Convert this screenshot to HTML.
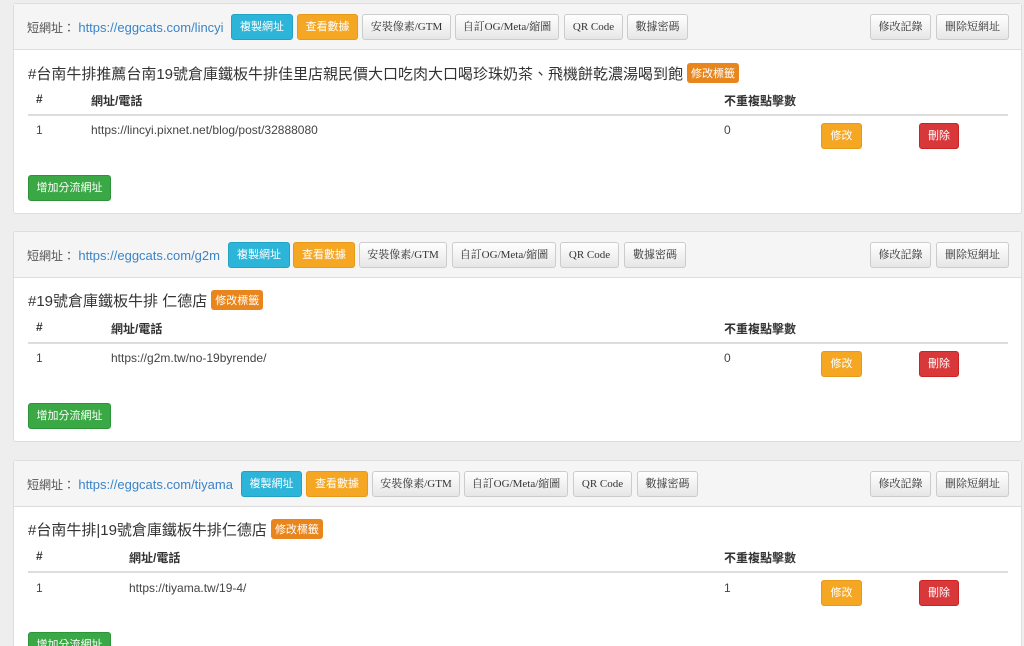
<!DOCTYPE html>
<html><head><meta charset="utf-8"><style>
*{box-sizing:border-box;margin:0;padding:0}
html,body{width:1024px;height:646px;overflow:hidden}
body{background:#eeeeee;font-family:"Liberation Sans","Noto Sans CJK TC",sans-serif;font-size:12px;color:#333;position:relative}
.p{position:absolute;left:13px;width:1009px;height:211px;background:#fff;border:1px solid #ddd;border-radius:3px}
.h{position:absolute;left:0;top:0;right:0;height:46px;background:#f5f5f5;border-bottom:1px solid #ddd}
.a{position:absolute;height:26px;line-height:24px;text-align:center;border-radius:3px;font-size:11px;border:1px solid #ccc;background:linear-gradient(#fff,#e6e6e6);color:#333;font-family:"Liberation Serif","Noto Serif CJK SC",serif}
.info{background:#2cb5d9;border-color:#22a3c5;color:#fff;font-family:"Liberation Sans","Noto Sans CJK TC",sans-serif}
.warn{background:#f5a623;border-color:#e59a1a;color:#fff;font-family:"Liberation Sans","Noto Sans CJK TC",sans-serif}
.dang{background:#d9383a;border-color:#c22;color:#fff;font-family:"Liberation Sans","Noto Sans CJK TC",sans-serif}
.succ{background:#3aa845;border-color:#2e9439;color:#fff;font-family:"Liberation Sans","Noto Sans CJK TC",sans-serif}
.lab{position:absolute;top:15px;left:13px;font-size:12px;color:#555}
.lab span{color:#3a84c9;font-size:13px}
.t{position:absolute;left:14px;font-size:15px;color:#333}
.tag{display:inline-block;background:#e8851c;color:#fff;font-size:11px;padding:2px 4px;border-radius:3px;vertical-align:2px;margin-left:4px}
.th{position:absolute;font-weight:bold;font-size:12px}
.ln{position:absolute;left:14px;width:980px;height:2px;background:#ddd}
.td{position:absolute;font-size:12px;color:#444}
</style></head><body>

<div class="p" style="top:3px">
<div class="h">
<div class="lab">短網址： <span>https://eggcats.com/lincyi</span></div>
<div class="a info" style="left:217px;top:10px;width:62px">複製網址</div>
<div class="a warn" style="left:283px;top:10px;width:61px">查看數據</div>
<div class="a" style="left:348px;top:10px;width:89px">安裝像素/GTM</div>
<div class="a" style="left:441px;top:10px;width:104px">自訂OG/Meta/縮圖</div>
<div class="a" style="left:550px;top:10px;width:59px">QR Code</div>
<div class="a" style="left:613px;top:10px;width:61px">數據密碼</div>
<div class="a" style="left:856px;top:10px;width:61px">修改記錄</div>
<div class="a" style="left:922px;top:10px;width:73px">刪除短網址</div>
</div>
<div class="t" style="top:59px">#台南牛排推薦台南19號倉庫鐵板牛排佳里店親民價大口吃肉大口喝珍珠奶茶、飛機餅乾濃湯喝到飽<span class="tag">修改標籤</span></div>
<div class="th" style="left:22px;top:88px">#</div>
<div class="th" style="left:77px;top:88px">網址/電話</div>
<div class="th" style="left:710px;top:88px">不重複點擊數</div>
<div class="ln" style="top:110px"></div>
<div class="td" style="left:22px;top:119px">1</div>
<div class="td" style="left:77px;top:119px">https://lincyi.pixnet.net/blog/post/32888080</div>
<div class="td" style="left:710px;top:119px">0</div>
<div class="a warn" style="left:807px;top:119px;width:41px">修改</div>
<div class="a dang" style="left:905px;top:119px;width:40px">刪除</div>
<div class="a succ" style="left:14px;top:171px;width:83px">增加分流網址</div>
</div>

<div class="p" style="top:231px">
<div class="h">
<div class="lab">短網址： <span>https://eggcats.com/g2m</span></div>
<div class="a info" style="left:214px;top:10px;width:62px">複製網址</div>
<div class="a warn" style="left:279px;top:10px;width:62px">查看數據</div>
<div class="a" style="left:345px;top:10px;width:88px">安裝像素/GTM</div>
<div class="a" style="left:438px;top:10px;width:104px">自訂OG/Meta/縮圖</div>
<div class="a" style="left:546px;top:10px;width:59px">QR Code</div>
<div class="a" style="left:610px;top:10px;width:62px">數據密碼</div>
<div class="a" style="left:856px;top:10px;width:61px">修改記錄</div>
<div class="a" style="left:922px;top:10px;width:73px">刪除短網址</div>
</div>
<div class="t" style="top:58px">#19號倉庫鐵板牛排 仁德店<span class="tag">修改標籤</span></div>
<div class="th" style="left:22px;top:88px">#</div>
<div class="th" style="left:97px;top:88px">網址/電話</div>
<div class="th" style="left:710px;top:88px">不重複點擊數</div>
<div class="ln" style="top:110px"></div>
<div class="td" style="left:22px;top:119px">1</div>
<div class="td" style="left:97px;top:119px">https://g2m.tw/no-19byrende/</div>
<div class="td" style="left:710px;top:119px">0</div>
<div class="a warn" style="left:807px;top:119px;width:41px">修改</div>
<div class="a dang" style="left:905px;top:119px;width:40px">刪除</div>
<div class="a succ" style="left:14px;top:171px;width:83px">增加分流網址</div>
</div>

<div class="p" style="top:460px;height:200px">
<div class="h">
<div class="lab">短網址： <span>https://eggcats.com/tiyama</span></div>
<div class="a info" style="left:227px;top:10px;width:61px">複製網址</div>
<div class="a warn" style="left:292px;top:10px;width:62px">查看數據</div>
<div class="a" style="left:358px;top:10px;width:88px">安裝像素/GTM</div>
<div class="a" style="left:450px;top:10px;width:104px">自訂OG/Meta/縮圖</div>
<div class="a" style="left:559px;top:10px;width:59px">QR Code</div>
<div class="a" style="left:623px;top:10px;width:61px">數據密碼</div>
<div class="a" style="left:856px;top:10px;width:61px">修改記錄</div>
<div class="a" style="left:922px;top:10px;width:73px">刪除短網址</div>
</div>
<div class="t" style="top:58px">#台南牛排|19號倉庫鐵板牛排仁德店<span class="tag">修改標籤</span></div>
<div class="th" style="left:22px;top:88px">#</div>
<div class="th" style="left:115px;top:88px">網址/電話</div>
<div class="th" style="left:710px;top:88px">不重複點擊數</div>
<div class="ln" style="top:110px"></div>
<div class="td" style="left:22px;top:120px">1</div>
<div class="td" style="left:115px;top:120px">https://tiyama.tw/19-4/</div>
<div class="td" style="left:710px;top:120px">1</div>
<div class="a warn" style="left:807px;top:119px;width:41px">修改</div>
<div class="a dang" style="left:905px;top:119px;width:40px">刪除</div>
<div class="a succ" style="left:14px;top:171px;width:83px">增加分流網址</div>
</div>
</body></html>
